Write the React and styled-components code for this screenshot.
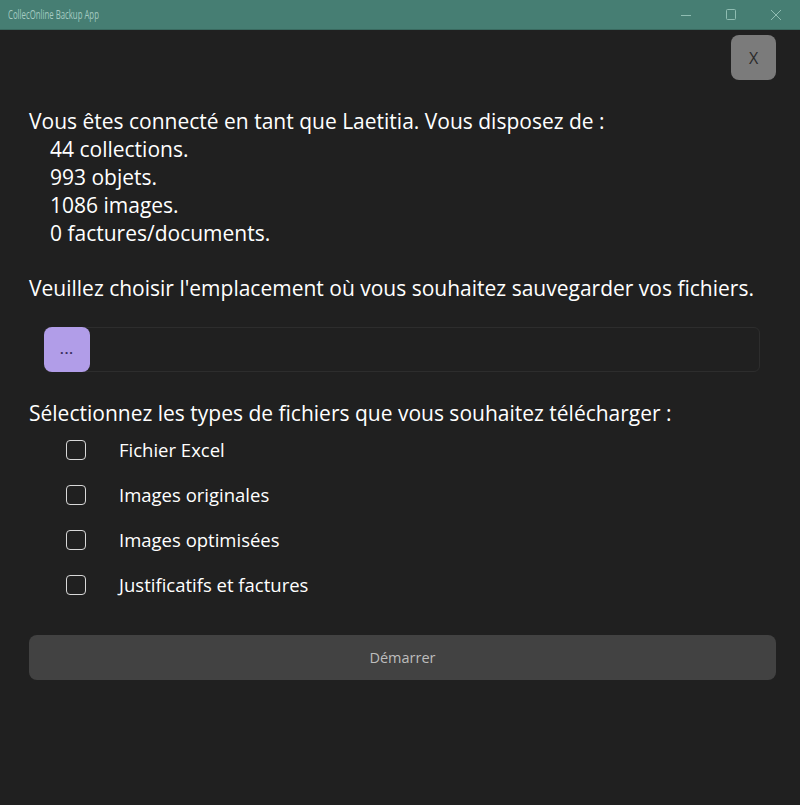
import React, { useState } from "react";
import styled, { createGlobalStyle } from "styled-components";

const GlobalStyle = createGlobalStyle`
  html, body {
    margin: 0;
    padding: 0;
    background: #202020;
    font-family: "Open Sans", "Noto Sans", sans-serif;
  }
`;

const Window = styled.div`
  width: 800px;
  height: 805px;
  background: #202020;
  display: flex;
  flex-direction: column;
  overflow: hidden;
`;

const TitleBar = styled.div`
  height: 29px;
  background: #467e73;
  display: flex;
  align-items: center;
  justify-content: space-between;
  border-bottom: 1px solid #3a6a60;
`;

const Title = styled.span`
  font-size: 12px;
  color: #a4cbc1;
  margin-left: 8px;
  display: inline-block;
  transform: scaleX(0.65);
  transform-origin: left center;
  white-space: nowrap;
`;

const Controls = styled.div`
  display: flex;
  height: 100%;
  padding-right: 2px;
`;

const Ctrl = styled.div`
  width: 45px;
  height: 100%;
  display: flex;
  align-items: center;
  justify-content: center;
`;

const Body = styled.div`
  padding: 5px 24px 0 29px;
  display: flex;
  flex-direction: column;
`;

const TopRow = styled.div`
  display: flex;
  justify-content: flex-end;
`;

const CloseButton = styled.button`
  width: 45px;
  height: 45px;
  border: none;
  border-radius: 8px;
  background: #7b7b7b;
  color: #2a2a2a;
  font-family: "Open Sans", sans-serif;
  font-size: 16px;
  padding: 0;
`;

const Info = styled.div`
  margin-top: 27px;
  font-size: 21px;
  line-height: 28px;
  color: #ffffff;
`;

const Indent = styled.div`
  padding-left: 21px;
`;

const Paragraph = styled.p`
  margin: ${({ mt }) => mt || "0"} 0 0;
  font-size: 21px;
  line-height: 28px;
  color: #ffffff;
`;

const PathRow = styled.div`
  margin: 25px 16px 0 15px;
  height: 43px;
  display: flex;
  border: 1px solid #2d2d2d;
  border-radius: 6px;
`;

const BrowseButton = styled.button`
  width: 46px;
  height: 45px;
  margin: -1px 0 0 -1px;
  border: none;
  border-radius: 8px;
  background: #b19de8;
  color: #3a3060;
  font-size: 13px;
  font-weight: bold;
  padding: 0;
  letter-spacing: 1px;
`;

const Options = styled.div`
  display: flex;
  flex-direction: column;
  padding-left: 37px;
`;

const Option = styled.label`
  display: flex;
  align-items: center;
  height: 45px;
  color: #ffffff;
  font-size: 18.5px;
`;

const Box = styled.span`
  width: 18px;
  height: 18px;
  border: 1.5px solid #d8d8d8;
  border-radius: 4px;
  margin-right: 33px;
  background: ${({ checked }) => (checked ? "#b19de8" : "transparent")};
`;

const StartButton = styled.button`
  margin-top: 28px;
  height: 45px;
  width: 747px;
  border: none;
  border-radius: 8px;
  background: #424242;
  color: #bdbdbd;
  font-family: "Open Sans", sans-serif;
  font-size: 14.5px;
`;

const options = [
  "Fichier Excel",
  "Images originales",
  "Images optimisées",
  "Justificatifs et factures",
];

export default function App() {
  const [checked, setChecked] = useState({});
  return (
    <>
      <GlobalStyle />
      <Window>
        <TitleBar>
          <Title>CollecOnline Backup App</Title>
          <Controls>
            <Ctrl>
              <svg width="10" height="10" viewBox="0 0 10 10">
                <path d="M0 5.5h10" stroke="#8fbdb2" strokeWidth="1" />
              </svg>
            </Ctrl>
            <Ctrl>
              <svg width="10" height="11" viewBox="0 0 10 11">
                <rect x="0.5" y="0.5" width="9" height="10" rx="1" fill="none" stroke="#8fbdb2" />
              </svg>
            </Ctrl>
            <Ctrl>
              <svg width="10" height="10" viewBox="0 0 10 10">
                <path d="M0 0L10 10M10 0L0 10" stroke="#8fbdb2" strokeWidth="1" />
              </svg>
            </Ctrl>
          </Controls>
        </TitleBar>
        <Body>
          <TopRow>
            <CloseButton>X</CloseButton>
          </TopRow>
          <Info>
            <div>Vous êtes connecté en tant que Laetitia. Vous disposez de :</div>
            <Indent>
              <div>44 collections.</div>
              <div>993 objets.</div>
              <div>1086 images.</div>
              <div>0 factures/documents.</div>
            </Indent>
          </Info>
          <Paragraph mt="27px">
            Veuillez choisir l'emplacement où vous souhaitez sauvegarder vos fichiers.
          </Paragraph>
          <PathRow>
            <BrowseButton>...</BrowseButton>
          </PathRow>
          <Paragraph mt="27px">
            Sélectionnez les types de fichiers que vous souhaitez télécharger :
          </Paragraph>
          <Options>
            {options.map((o) => (
              <Option key={o} onClick={() => setChecked({ ...checked, [o]: !checked[o] })}>
                <Box checked={checked[o]} />
                {o}
              </Option>
            ))}
          </Options>
          <StartButton>Démarrer</StartButton>
        </Body>
      </Window>
    </>
  );
}
